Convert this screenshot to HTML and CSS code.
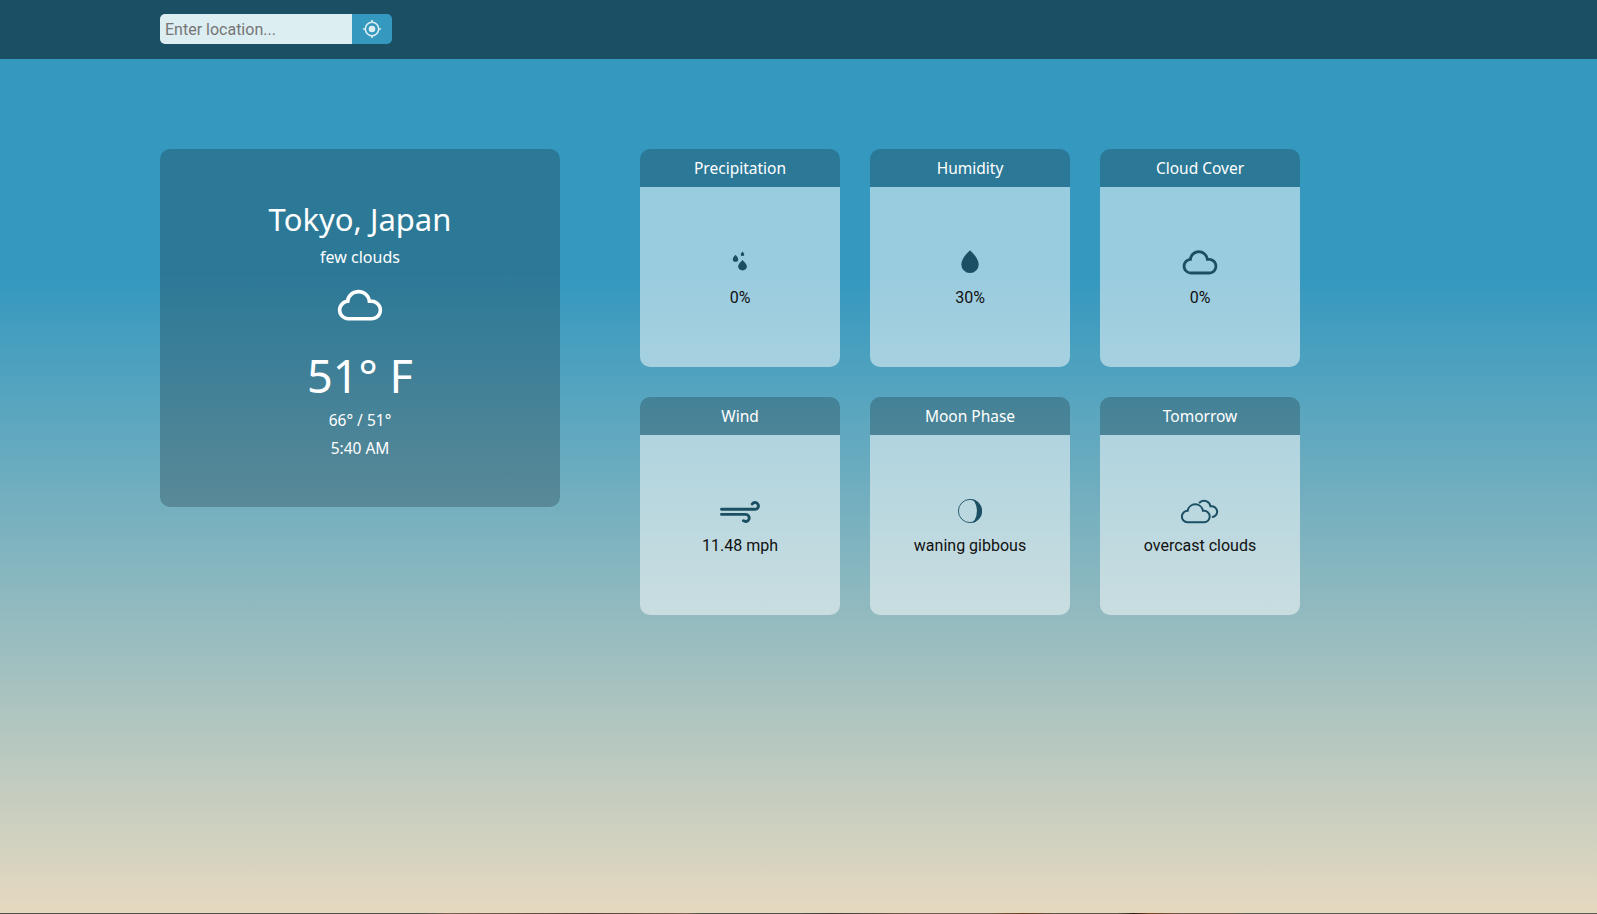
FILE: index.html
```
<!DOCTYPE html>
<html lang="en">
<head>
<meta charset="utf-8">
<title>Weather</title>
<link rel="stylesheet" href="styles.css">
</head>
<body>
<svg class="defs" width="0" height="0">
  <symbol id="cloud" viewBox="0 0 30 30"><path fill-rule="evenodd" d="M4.61,16.88c0-1.15,0.36-2.17,1.08-3.07c0.72-0.9,1.63-1.48,2.74-1.73c0.31-1.37,1.02-2.49,2.11-3.37s2.35-1.32,3.76-1.32c1.38,0,2.61,0.43,3.69,1.28s1.78,1.95,2.1,3.29h0.33c0.9,0,1.73,0.22,2.49,0.65s1.37,1.03,1.81,1.79c0.44,0.76,0.67,1.58,0.67,2.48c0,0.88-0.21,1.7-0.63,2.45s-1,1.35-1.73,1.8c-0.73,0.45-1.54,0.69-2.41,0.72H9.41c-1.34-0.06-2.47-0.57-3.4-1.53C5.08,19.37,4.61,18.21,4.61,16.88z M6.32,16.88c0,0.87,0.3,1.62,0.9,2.26s1.33,0.98,2.19,1.03h11.19c0.86-0.04,1.59-0.39,2.19-1.03c0.61-0.64,0.91-1.4,0.91-2.26c0-0.88-0.33-1.63-0.98-2.27c-0.65-0.64-1.42-0.96-2.31-0.96H18.8c-0.11,0-0.17-0.06-0.17-0.18l-0.07-0.57c-0.11-1.08-0.58-1.99-1.39-2.71c-0.82-0.73-1.76-1.09-2.85-1.09c-1.09,0-2.05,0.36-2.85,1.09c-0.81,0.73-1.26,1.63-1.36,2.71l-0.07,0.53c0,0.12-0.07,0.19-0.2,0.19l-0.53,0.03c-0.83,0.1-1.53,0.46-2.1,1.07S6.32,16.02,6.32,16.88z"/></symbol>
</svg>
<header class="topbar">
  <form class="search">
    <input class="search-input" type="text" placeholder="Enter location...">
    <button class="search-btn" type="button" aria-label="Use my location">
      <svg width="20" height="20" viewBox="0 0 20 20" fill="none" stroke="currentColor"><circle cx="10" cy="10" r="6.7" stroke-width="1.6"/><circle cx="10" cy="10" r="3.3" fill="currentColor" stroke="none"/><path stroke-width="1.6" d="M10 1v2.4M10 16.6V19M1 10h2.4M16.6 10H19"/></svg>
    </button>
  </form>
</header>
<main class="content">
  <section class="current">
    <h1 class="city">Tokyo, Japan</h1>
    <p class="sky">few clouds</p>
    <svg class="current-icon"><use href="#cloud"/></svg>
    <p class="temp">51° F</p>
    <p class="range">66° / 51°</p>
    <p class="time">5:40 AM</p>
  </section>
  <section class="grid">
    <article class="card">
      <h2 class="card-title t-precip">Precipitation</h2>
      <div class="card-body">
        <svg class="icon" viewBox="0 0 50 50"><path d="M27.5 22c1.6 1.7 4.4 4.2 4.4 6.6a4.4 3.9 0 0 1-8.8 0c0-2.400 2.800-4.900 4.400-6.600zM20.500 16.700c1 1.200 2.700 2.900 2.700 4.500a2.700 2.600 0 0 1-5.400 0c0-1.600 1.700-3.300 2.700-4.500zM27.500 13.500c.7.900 1.800 1.900 1.800 2.900a1.800 1.700 0 0 1-3.600 0c0-1 1.100-2 1.800-2.900z"/></svg>
        <p class="value">0%</p>
      </div>
    </article>
    <article class="card">
      <h2 class="card-title t-humid">Humidity</h2>
      <div class="card-body">
        <svg class="icon" viewBox="0 0 50 50"><path d="M25 12.200c3 3 8.700 8.700 8.700 14.200a8.700 8.600 0 0 1-17.400 0c0-5.500 5.700-11.200 8.700-14.200z"/></svg>
        <p class="value">30%</p>
      </div>
    </article>
    <article class="card">
      <h2 class="card-title t-cloud">Cloud Cover</h2>
      <div class="card-body">
        <svg class="icon"><use href="#cloud"/></svg>
        <p class="value">0%</p>
      </div>
    </article>
    <article class="card">
      <h2 class="card-title t-wind">Wind</h2>
      <div class="card-body">
        <svg class="icon line" viewBox="0 0 50 50" stroke-width="2.900"><path d="M6.500 23.300H40a3.400 3.400 0 1 0-2.800-5.300M6.500 28.400H30.600a3.550 3.550 0 1 1-2.200 6.300"/></svg>
        <p class="value">11.48 mph</p>
      </div>
    </article>
    <article class="card">
      <h2 class="card-title t-moon">Moon Phase</h2>
      <div class="card-body">
        <svg class="icon" viewBox="0 0 50 50"><circle cx="25" cy="25" r="11.600" fill="none" stroke="currentColor" stroke-width=".9"/><path d="M25 13a12 12 0 0 1 0 24a6.900 12 0 0 0 0-24z"/></svg>
        <p class="value">waning gibbous</p>
      </div>
    </article>
    <article class="card">
      <h2 class="card-title t-tomorrow">Tomorrow</h2>
      <div class="card-body">
        <svg class="icon line" viewBox="0 0 50 50" stroke-width="2"><path d="M12.500 36.300a5.750 5.750 0 0 1 .2-11.500a7.700 7.700 0 0 1 15.200 0h1.100a5.750 5.750 0 0 1 0 11.500zM24.700 16.500A6.500 6.500 0 0 1 35.500 20.300A5.400 5.400 0 0 1 37.800 31"/></svg>
        <p class="value">overcast clouds</p>
      </div>
    </article>
  </section>
</main>
<footer class="landscape"></footer>
</body>
</html>
```
FILE: styles.css
```
* { box-sizing: border-box; margin: 0; padding: 0; }

body {
  height: 914px;
  overflow: hidden;
  display: flex;
  flex-direction: column;
  font-family: Roboto, sans-serif;
  font-size: 16px;
  background: linear-gradient(to bottom, #3498bf 30%, #e6d9c0 100%);
}

.defs { position: absolute; }

.topbar {
  height: 59px;
  flex: none;
  padding: 14px 0 0 160px;
  background: #1b4f63;
}

.search { display: flex; width: 232px; height: 30px; border-radius: 5px; overflow: hidden; }

.search-input {
  width: 192px;
  border: 0;
  padding: 0 5px;
  font: 16px Roboto, sans-serif;
  background: #dceef2;
}
.search-input::placeholder { color: #757575; }

.search-btn {
  width: 40px;
  border: 0;
  display: flex;
  align-items: center;
  justify-content: center;
  background: #3498bf;
  color: #dceef2;
}

.content {
  flex: 1;
  display: flex;
  align-items: flex-start;
  gap: 80px;
  padding: 90px 0 0 160px;
}

.current, .card-title { font-family: "Noto Sans", sans-serif; color: #fff; font-weight: 400; }

.current {
  width: 400px;
  height: 358px;
  padding-top: 50px;
  display: flex;
  flex-direction: column;
  align-items: center;
  border-radius: 10px;
  background: rgba(27, 50, 60, 0.3);
}

.city { font-size: 31px; line-height: 40px; font-weight: 400; }
.sky { margin-top: 4px; font-size: 16px; line-height: 28px; }
.current-icon { width: 64px; height: 64px; margin-top: 3px; fill: currentColor; }
.temp { font-size: 45px; line-height: 60px; margin-top: 8px; }
.range, .time { font-size: 15.500px; line-height: 28px; }

.grid { display: grid; grid-template-columns: repeat(3, 200px); gap: 30px; }

.card { height: 218px; border-radius: 10px; overflow: hidden; }

.card-title {
  height: 38px;
  line-height: 38px;
  font-size: 15.500px;
  text-align: center;
  background: rgba(27, 50, 60, 0.3);
}

.card-body {
  height: 180px;
  padding-top: 51px;
  display: flex;
  flex-direction: column;
  align-items: center;
  background: rgba(255, 255, 255, 0.5);
}

.icon { width: 50px; height: 50px; color: #1b4f63; fill: currentColor; }
.line { fill: none; stroke: currentColor; stroke-linecap: round; }

.value { line-height: 20px; color: #111; }

.landscape { height: 1px; flex: none; background: linear-gradient(to right, #4a5049 0 26%, #7a6355 28%, #553f38 37%, #7a6355 43%, #4a5049 44% 50%, #403a38 52%, #75604f 57%, #75604f 62%, #6b3a1c 64%, #5f5548 66% 70%, #2b1a12 71%, #7a431c 72%, #6f5a4c 74% 77%, #5a5a54 78%); }
```
